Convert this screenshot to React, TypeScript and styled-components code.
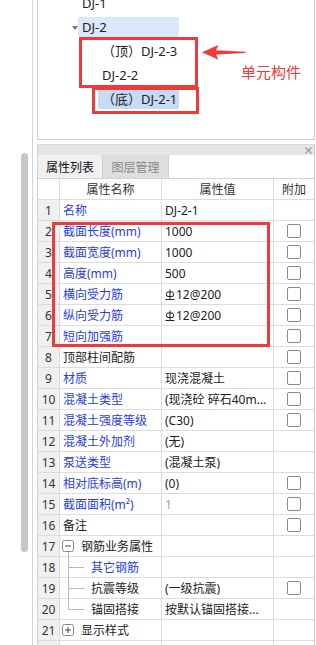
import React from 'react';
import styled, { createGlobalStyle } from 'styled-components';

const GlobalStyle = createGlobalStyle`
  html, body { margin: 0; padding: 0; background: #fff; }
  body {
    font-family: "Noto Sans", "Noto Sans CJK SC", sans-serif;
    font-size: 12px;
    color: #222;
  }
`;

const RED = '#f03a3a';
const BLUE = '#2a3ce6';
const GRID = '#dcdcdc';

const Page = styled.div`
  position: relative;
  display: flex;
  width: 316px;
  height: 645px;
  overflow: hidden;
  background: #fff;
`;

const Gutter = styled.div`
  flex: none;
  width: 33px;
  box-sizing: border-box;
  padding: 153px 0 0 21px;
  border-right: 1px solid #d6d6d6;
`;

const Thumb = styled.div`
  width: 7px;
  height: 399px;
  border-radius: 4px;
  background: #c6c6c6;
`;

const Main = styled.div`
  flex: none;
  width: 278px;
  margin-left: 4px;
  display: flex;
  flex-direction: column;
`;

/* ---------- tree ---------- */

const TreePanel = styled.div`
  flex: none;
  height: 140px;
  box-sizing: border-box;
  border: 1px solid #cfcfcf;
  border-top: none;
  overflow: hidden;
`;

const TreeList = styled.div`
  margin-top: -9px;
  display: flex;
  flex-direction: column;
`;

const TreeRow = styled.div<{ $level: number }>`
  display: flex;
  align-items: center;
  height: 24px;
  padding-left: ${p => (p.$level ? 54 : 34)}px;
`;

const Caret = styled.span<{ $show: boolean }>`
  flex: none;
  width: 0;
  height: 0;
  margin-top: 1px;
  border-left: 3px solid transparent;
  border-right: 3px solid transparent;
  border-top: 4px solid #777;
  visibility: ${p => (p.$show ? 'visible' : 'hidden')};
`;

const TreeLabel = styled.span<{ $level: number; $tone?: 'open' | 'selected' }>`
  box-sizing: border-box;
  width: ${p => (p.$level ? 81 : 101)}px;
  height: 20px;
  line-height: 20px;
  padding: 0 4px;
  border-radius: 2px;
  font-size: 13px;
  color: #222;
  white-space: nowrap;
  background: ${p =>
    p.$tone === 'selected' ? '#c5daf4' : p.$tone === 'open' ? '#dbe8fa' : 'transparent'};
`;

/* ---------- property panel ---------- */

const PropPanel = styled.div`
  flex: 1;
  margin-top: 4px;
  display: flex;
  flex-direction: column;
  border-left: 1px solid #cfcfcf;
  border-right: 1px solid #cfcfcf;
`;

const PanelHeader = styled.div`
  height: 11px;
  box-sizing: border-box;
  border-top: 1px solid #d6d6d6;
  background: #e5e5e5;
  display: flex;
  align-items: center;
  justify-content: flex-end;
  padding-right: 2px;
`;

const TabBar = styled.div`
  height: 24px;
  box-sizing: border-box;
  display: flex;
  border-bottom: 1px solid #d4d4d4;
`;

const Tab = styled.div<{ $active?: boolean }>`
  width: ${p => (p.$active ? 65 : 66)}px;
  box-sizing: border-box;
  display: flex;
  align-items: center;
  justify-content: center;
  border-right: 1px solid #cdcdcd;
  background: ${p => (p.$active ? '#f0f0f0' : '#dedede')};
  color: ${p => (p.$active ? '#111' : '#8a8a8a')};
  font-size: 12px;
`;

const Row = styled.div`
  display: grid;
  grid-template-columns: 22px 102px 112px 40px;
  height: 21px;
  flex: none;
`;

const Cell = styled.div`
  box-sizing: border-box;
  display: flex;
  align-items: center;
  border-right: 1px solid ${GRID};
  border-bottom: 1px solid ${GRID};
  white-space: nowrap;
  overflow: hidden;
`;

const NumCell = styled(Cell)<{ $head?: boolean }>`
  justify-content: center;
  background: ${p => (p.$head ? '#fff' : '#f0f0f0')};
  color: #333;
`;

const HeadCell = styled(Cell)`
  justify-content: center;
  color: #333;
`;

const NameCell = styled(Cell)<{ $blue?: boolean }>`
  padding-left: 3px;
  overflow: visible;
  color: ${p => (p.$blue ? BLUE : '#222')};
`;

const ValueCell = styled(Cell)<{ $muted?: boolean }>`
  padding-left: 3px;
  color: ${p => (p.$muted ? '#8fa2c9' : '#222')};
`;

const ExtraCell = styled(Cell)`
  justify-content: center;
  border-right: none;
`;

const Check = styled.span`
  width: 14px;
  height: 14px;
  box-sizing: border-box;
  border: 1px solid #8a8a8a;
  border-radius: 2px;
  background: #fff;
`;

const NodeText = styled.span`
  margin-left: 7px;
`;

const TreeIcon = styled.svg`
  flex: none;
  margin-left: -1px;
  overflow: visible;
`;

/* ---------- annotations ---------- */

const RedBox = styled.div<{ $x: number; $y: number; $w: number; $h: number }>`
  position: absolute;
  left: ${p => p.$x}px;
  top: ${p => p.$y}px;
  width: ${p => p.$w}px;
  height: ${p => p.$h}px;
  box-sizing: border-box;
  border: 3px solid ${RED};
  pointer-events: none;
`;

const Arrow = styled.svg`
  position: absolute;
  left: 202px;
  top: 44px;
`;

const Note = styled.div`
  position: absolute;
  left: 241px;
  top: 62px;
  font-family: "Noto Sans CJK SC", sans-serif;
  font-size: 15px;
  line-height: 20px;
  color: ${RED};
`;

/* ---------- icons ---------- */

const Close = () => (
  <svg width="7" height="7" viewBox="0 0 7 7">
    <path d="M0.5 0.5L6.5 6.5M6.5 0.5L0.5 6.5" stroke="#9a9a9a" strokeWidth="1.1" />
  </svg>
);

const Rebar = () => (
  <svg width="10" height="11" viewBox="0 0 10 11" style={{ marginRight: 1 }}>
    <g stroke="#222" strokeWidth="1" fill="none">
      <path d="M5 0.5V10" />
      <rect x="1.5" y="3" width="7" height="4.5" rx="1.5" />
      <path d="M0.5 10.5H9.5" />
    </g>
  </svg>
);

const Toggle = ({ open }: { open: boolean }) => (
  <TreeIcon width="12" height="20" viewBox="0 0 12 20">
    <rect x="0.5" y="4.5" width="11" height="11" rx="2" fill="#fff" stroke="#8a8a8a" />
    <path d="M3 10H9" stroke="#444" />
    {!open && <path d="M6 7V13" stroke="#444" />}
    {open && <path d="M6.5 16V21" stroke="#bbb" />}
  </TreeIcon>
);

const Guide = ({ last }: { last?: boolean }) => (
  <TreeIcon width="22" height="20" viewBox="0 0 22 20">
    <path d={last ? 'M6.5 -1V10.5' : 'M6.5 -1V21'} stroke="#bbb" />
    <path d="M6.5 10.5H22" stroke="#bbb" />
  </TreeIcon>
);

/* ---------- data ---------- */

type Prop = {
  n?: number;
  name?: string;
  blue?: boolean;
  value?: string;
  rebar?: boolean;
  muted?: boolean;
  check?: boolean;
  node?: 'open' | 'closed' | 'child' | 'last';
};

const props: Prop[] = [
  { n: 1, name: '名称', blue: true, value: 'DJ-2-1' },
  { n: 2, name: '截面长度(mm)', blue: true, value: '1000', check: true },
  { n: 3, name: '截面宽度(mm)', blue: true, value: '1000', check: true },
  { n: 4, name: '高度(mm)', blue: true, value: '500', check: true },
  { n: 5, name: '横向受力筋', blue: true, value: '12@200', rebar: true, check: true },
  { n: 6, name: '纵向受力筋', blue: true, value: '12@200', rebar: true, check: true },
  { n: 7, name: '短向加强筋', blue: true, check: true },
  { n: 8, name: '顶部柱间配筋', check: true },
  { n: 9, name: '材质', blue: true, value: '现浇混凝土', check: true },
  { n: 10, name: '混凝土类型', blue: true, value: '(现浇砼 碎石40m...', check: true },
  { n: 11, name: '混凝土强度等级', blue: true, value: '(C30)', check: true },
  { n: 12, name: '混凝土外加剂', blue: true, value: '(无)' },
  { n: 13, name: '泵送类型', blue: true, value: '(混凝土泵)' },
  { n: 14, name: '相对底标高(m)', blue: true, value: '(0)', check: true },
  { n: 15, name: '截面面积(m²)', blue: true, value: '1', muted: true, check: true },
  { n: 16, name: '备注', check: true },
  { n: 17, name: '钢筋业务属性', node: 'open' },
  { n: 18, name: '其它钢筋', blue: true, node: 'child' },
  { n: 19, name: '抗震等级', node: 'child', value: '(一级抗震)', check: true },
  { n: 20, name: '锚固搭接', node: 'last', value: '按默认锚固搭接...' },
  { n: 21, name: '显示样式', node: 'closed' },
  {},
];

const treeItems: { level: number; text: string; caret?: boolean; tone?: 'open' | 'selected' }[] = [
  { level: 0, text: 'DJ-1' },
  { level: 0, text: 'DJ-2', caret: true, tone: 'open' },
  { level: 1, text: '（顶）DJ-2-3' },
  { level: 1, text: 'DJ-2-2' },
  { level: 1, text: '（底）DJ-2-1', tone: 'selected' },
];

const NameContent = ({ p }: { p: Prop }) => {
  if (p.node === 'open' || p.node === 'closed') {
    return (
      <>
        <Toggle open={p.node === 'open'} />
        <NodeText>{p.name}</NodeText>
      </>
    );
  }
  if (p.node === 'child' || p.node === 'last') {
    return (
      <>
        <Guide last={p.node === 'last'} />
        <NodeText>{p.name}</NodeText>
      </>
    );
  }
  return <>{p.name}</>;
};

export default function App() {
  return (
    <>
      <GlobalStyle />
      <Page>
        <Gutter>
          <Thumb />
        </Gutter>
        <Main>
          <TreePanel>
            <TreeList>
              {treeItems.map(t => (
                <TreeRow key={t.text} $level={t.level}>
                  <Caret $show={!!t.caret} />
                  <TreeLabel $level={t.level} $tone={t.tone}>
                    {t.text}
                  </TreeLabel>
                </TreeRow>
              ))}
            </TreeList>
          </TreePanel>

          <PropPanel>
            <PanelHeader>
              <Close />
            </PanelHeader>
            <TabBar>
              <Tab $active>属性列表</Tab>
              <Tab>图层管理</Tab>
            </TabBar>
            <Row>
              <NumCell $head />
              <HeadCell>属性名称</HeadCell>
              <HeadCell>属性值</HeadCell>
              <HeadCell style={{ borderRight: 'none' }}>附加</HeadCell>
            </Row>
            {props.map((p, i) => (
              <Row key={i}>
                <NumCell>{p.n}</NumCell>
                <NameCell $blue={p.blue}>
                  <NameContent p={p} />
                </NameCell>
                <ValueCell $muted={p.muted}>
                  {p.rebar && <Rebar />}
                  {p.value}
                </ValueCell>
                <ExtraCell>{p.check && <Check />}</ExtraCell>
              </Row>
            ))}
          </PropPanel>
        </Main>

        <RedBox $x={79} $y={37} $w={119} $h={51} />
        <RedBox $x={92} $y={87} $w={107} $h={27} />
        <Arrow width="44" height="18" viewBox="0 0 44 18">
          <path d="M0 8.3L16.5 1L14 6.3L43.5 7.8L43.5 8.9L14 10.4L16.5 15.8Z" fill={RED} />
        </Arrow>
        <Note>单元构件</Note>
        <RedBox $x={52} $y={222} $w={218} $h={125} />
      </Page>
    </>
  );
}
